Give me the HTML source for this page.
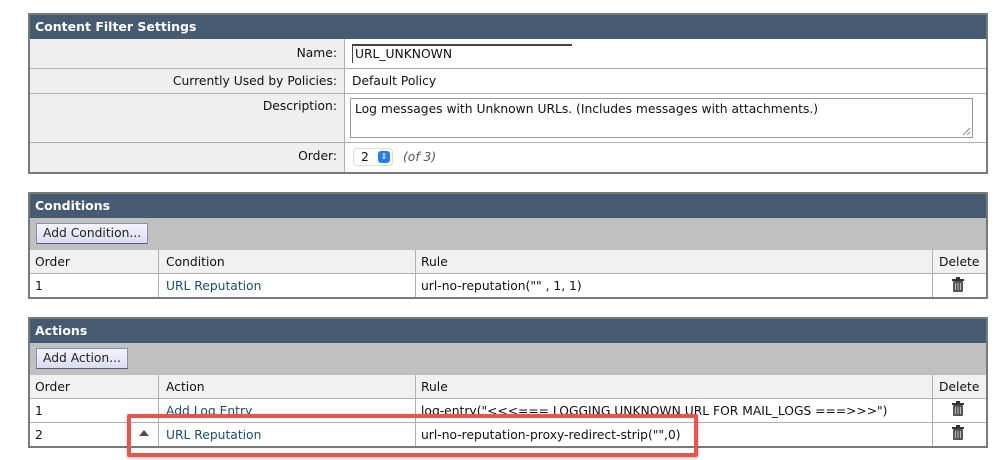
<!DOCTYPE html>
<html><head><meta charset="utf-8">
<style>
body{margin:0;width:999px;height:460px;background:#fff;position:relative;font-family:"DejaVu Sans","Liberation Sans",sans-serif;font-size:12.3px;color:#111;overflow:hidden}
.a{position:absolute;box-sizing:border-box}
.box{border:2px solid #7a7a7a;background:#fff}
.hd{background:#465a72;color:#fff;font-weight:bold;padding-left:5px;line-height:24px;font-size:12.5px}
.gray{background:#c0c0c0}
.ch{background:#f1f1f1}
.bl{border-bottom:1px solid #b0b0b0}
.vl{border-left:1px solid #b0b0b0}
.lab{background:#efefef}
.btn{background:linear-gradient(#f4f4ff,#dcdcf0);border:1px solid #8890b0;border-bottom-color:#555a80;padding:0 6px;line-height:19px;font-size:12.3px;color:#222}
.lnk{color:#1b4d6e}
.t{position:absolute;white-space:nowrap}
</style></head><body>

<div class="a box" style="left:28px;top:13px;width:960px;height:161px"></div>
<div class="a hd" style="left:30px;top:15px;width:956px;height:24px">Content Filter Settings</div>
<div class="a lab" style="left:30px;top:39px;width:314px;height:133px"></div>
<div class="a bl" style="left:30px;top:68px;width:956px;height:1px"></div>
<div class="a bl" style="left:30px;top:93px;width:956px;height:1px"></div>
<div class="a bl" style="left:30px;top:142px;width:956px;height:1px"></div>
<div class="a vl" style="left:344px;top:39px;width:1px;height:133px"></div>
<div class="t" style="right:662px;top:46px">Name:</div>
<div class="t" style="right:662px;top:74px">Currently Used by Policies:</div>
<div class="t" style="right:662px;top:99px">Description:</div>
<div class="t" style="right:662px;top:149px">Order:</div>
<div class="a" style="left:352px;top:44px;width:220px;height:19px;border-top:2px solid #444;border-left:1px solid #444"></div>
<div class="t" style="left:355px;top:47px">URL_UNKNOWN</div>
<div class="t" style="left:352px;top:74px">Default Policy</div>
<div class="a" style="left:350px;top:98px;width:623px;height:40px;border:1px solid #999"></div>
<svg class="a" style="left:962px;top:127px" width="9" height="9"><path d="M1 8L8 1M5 8L8 5" stroke="#888"/></svg>
<div class="t" style="left:355px;top:102px">Log messages with Unknown URLs. (Includes messages with attachments.)</div>
<div class="a" style="left:353px;top:148px;width:40px;height:18px;border:1px solid #ddd;border-radius:4px"></div>
<div class="t" style="left:361px;top:150px">2</div>
<div class="a" style="left:378px;top:151px;width:12px;height:12px;background:#2b7de9;border-radius:3px;color:#fff;font-size:8px;line-height:12px;text-align:center">⇕</div>
<div class="t" style="left:403px;top:150px;font-style:italic;color:#555">(of 3)</div>

<div class="a box" style="left:28px;top:192px;width:960px;height:107px"></div>
<div class="a hd" style="left:30px;top:194px;width:956px;height:24px">Conditions</div>
<div class="a gray" style="left:30px;top:218px;width:956px;height:32px"></div>
<div class="a btn" style="left:36px;top:223px">Add Condition...</div>
<div class="a ch bl" style="left:30px;top:250px;width:956px;height:24px"></div>
<div class="a vl" style="left:158px;top:250px;width:1px;height:47px"></div>
<div class="a vl" style="left:415px;top:250px;width:1px;height:47px"></div>
<div class="a vl" style="left:932px;top:250px;width:1px;height:47px"></div>
<div class="t" style="left:35px;top:255px">Order</div>
<div class="t" style="left:166px;top:255px">Condition</div>
<div class="t" style="left:421px;top:255px">Rule</div>
<div class="t" style="left:939px;top:255px">Delete</div>
<div class="t" style="left:35px;top:279px">1</div>
<div class="t lnk" style="left:166px;top:279px">URL Reputation</div>
<div class="t" style="left:421px;top:279px">url-no-reputation("" , 1, 1)</div>
<svg class="a" style="left:951px;top:277px" width="14" height="16" viewBox="0 0 14 16"><rect x="1" y="2" width="12" height="2" fill="#333"/><rect x="5" y="0" width="4" height="2" fill="#333"/><rect x="2" y="4" width="10" height="11" rx="1" fill="#555"/><path d="M4.5 6v7M7 6v7M9.5 6v7" stroke="#bbb" stroke-width="1"/></svg>

<div class="a box" style="left:28px;top:317px;width:960px;height:131px"></div>
<div class="a hd" style="left:30px;top:319px;width:956px;height:24px">Actions</div>
<div class="a gray" style="left:30px;top:343px;width:956px;height:32px"></div>
<div class="a btn" style="left:36px;top:348px">Add Action...</div>
<div class="a ch bl" style="left:30px;top:375px;width:956px;height:24px"></div>
<div class="a bl" style="left:30px;top:422px;width:956px;height:1px"></div>
<div class="a vl" style="left:158px;top:375px;width:1px;height:71px"></div>
<div class="a vl" style="left:415px;top:375px;width:1px;height:71px"></div>
<div class="a vl" style="left:932px;top:375px;width:1px;height:71px"></div>
<div class="t" style="left:35px;top:380px">Order</div>
<div class="t" style="left:166px;top:380px">Action</div>
<div class="t" style="left:421px;top:380px">Rule</div>
<div class="t" style="left:939px;top:380px">Delete</div>
<div class="t" style="left:35px;top:404px">1</div>
<div class="t lnk" style="left:166px;top:404px">Add Log Entry</div>
<div class="t" style="left:421px;top:404px">log-entry("&lt;&lt;&lt;=== LOGGING UNKNOWN URL FOR MAIL_LOGS ===&gt;&gt;&gt;")</div>
<div class="t" style="left:35px;top:428px">2</div>
<svg class="a" style="left:139px;top:430px" width="10" height="6"><path d="M0 6L5 0L10 6Z" fill="#5a4a40"/></svg>
<div class="t lnk" style="left:166px;top:428px">URL Reputation</div>
<div class="t" style="left:421px;top:428px">url-no-reputation-proxy-redirect-strip("",0)</div>
<svg class="a" style="left:951px;top:401px" width="14" height="16" viewBox="0 0 14 16"><rect x="1" y="2" width="12" height="2" fill="#333"/><rect x="5" y="0" width="4" height="2" fill="#333"/><rect x="2" y="4" width="10" height="11" rx="1" fill="#555"/><path d="M4.5 6v7M7 6v7M9.5 6v7" stroke="#bbb" stroke-width="1"/></svg>
<svg class="a" style="left:951px;top:425px" width="14" height="16" viewBox="0 0 14 16"><rect x="1" y="2" width="12" height="2" fill="#333"/><rect x="5" y="0" width="4" height="2" fill="#333"/><rect x="2" y="4" width="10" height="11" rx="1" fill="#555"/><path d="M4.5 6v7M7 6v7M9.5 6v7" stroke="#bbb" stroke-width="1"/></svg>

<div class="a" style="left:127px;top:414px;width:571px;height:43px;border:4px solid #e8554c;border-radius:2px;box-shadow:0 1px 3px rgba(0,0,0,.3)"></div>
</body></html>
